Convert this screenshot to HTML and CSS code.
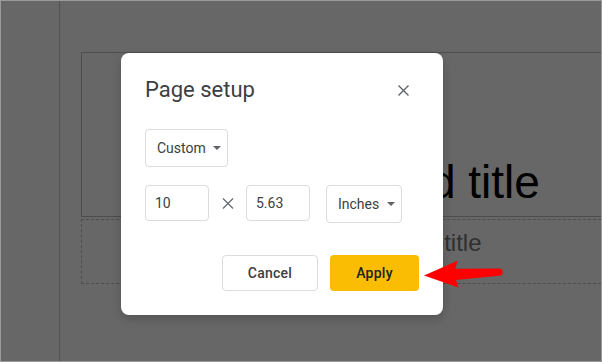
FILE: index.html
```html
<!DOCTYPE html>
<html lang="en">
<head>
    <meta charset="UTF-8">
    <title>Page setup</title>
    <link rel="stylesheet" href="styles.css">
</head>
<body>

    <div class="app">
        <div class="sidebar"></div>
        <div class="canvas">
            <div class="title-box">Click to add title</div>
            <div class="subtitle-box">Click to add subtitle</div>
        </div>
    </div>

    <div class="dialog">
        <div class="dialog-header">
            <h2>Page setup</h2>
            <button class="close-btn" aria-label="Close">
                <svg width="11" height="11" viewBox="0 0 11 11">
                    <path d="M0.5 0.5L10.5 10.5M10.5 0.5L0.5 10.5" stroke="#5f6368" stroke-width="1.4" fill="none"/>
                </svg>
            </button>
        </div>

        <div class="select preset">
            <span>Custom</span>
            <span class="caret"></span>
        </div>

        <div class="size-row">
            <div class="field">10</div>
            <div class="times">
                <svg width="12" height="11" viewBox="0 0 12 11">
                    <path d="M1 0.5L11 10.5M11 0.5L1 10.5" stroke="#5f6368" stroke-width="1.1" fill="none"/>
                </svg>
            </div>
            <div class="field">5.63</div>
            <div class="select units">
                <span>Inches</span>
                <span class="caret"></span>
            </div>
        </div>

        <div class="actions">
            <button class="btn btn-cancel">Cancel</button>
            <button class="btn btn-apply">Apply</button>
        </div>
    </div>

    <!-- annotation arrow pointing at Apply -->
    <svg class="arrow" width="90" height="40" viewBox="420 255 90 40">
        <path d="M424 275.5 L457.5 260.8 L455.5 268.8 L499 268.6 A3.5 3.5 0 0 1 499 275.8 L456 280 L458.5 287.5 Z" fill="#ff0000"/>
    </svg>

</body>
</html>
```

FILE: styles.css
```css
* {
    box-sizing: border-box;
}

body {
    margin: 0;
    width: 602px;
    height: 362px;
    overflow: hidden;
    position: relative;
    background-color: #666766;
    border: 1px solid #9a9a9a;
    font-family: Roboto, "Liberation Sans", sans-serif;
}

.app {
    display: flex;
    height: 100%;
}

.sidebar {
    width: 59px;
    flex-shrink: 0;
    border-right: 1px solid #525352;
}

.canvas {
    flex: 1;
    min-width: 0;
    padding: 51px 0 0 21px;
    font-family: "Liberation Sans", Arial, sans-serif;
}

/* the slide runs on past the right edge, so its boxes have no right border */
.title-box {
    height: 165px;
    padding: 103px 0 0 72px;
    border: 1px solid #4c4d4c;
    border-right: none;
    font-size: 46px;
    line-height: 53px;
    text-align: center;
    color: #000;
    white-space: nowrap;
}

.subtitle-box {
    height: 65px;
    margin-top: 2px;
    padding: 9px 0 0 72px;
    border: 1px dashed #4c4d4c;
    border-right: none;
    font-size: 24px;
    line-height: 28px;
    text-align: center;
    color: #303030;
    white-space: nowrap;
}

.dialog {
    position: absolute;
    left: 120px;
    top: 52px;
    width: 322px;
    height: 262px;
    padding: 24px;
    background-color: #fff;
    border-radius: 8px;
    box-shadow: 0 4px 10px rgba(0, 0, 0, 0.18);
    display: flex;
    flex-direction: column;
    align-items: flex-start;
    color: #3c4043;
}

.dialog-header {
    width: 100%;
    height: 26px;
    display: flex;
    justify-content: space-between;
    align-items: center;
}

.dialog-header h2 {
    margin: 0;
    font-size: 22px;
    font-weight: 400;
    line-height: 26px;
    color: #3c4043;
}

.close-btn {
    width: 32px;
    height: 26px;
    padding: 0;
    border: none;
    background: none;
    display: flex;
    align-items: center;
    justify-content: center;
}

.select {
    height: 38px;
    display: flex;
    align-items: center;
    padding-left: 11px;
    border: 1px solid #dadce0;
    border-radius: 4px;
    font-size: 14px;
}

.preset {
    width: 83px;
    margin-top: 26px;
}

.units {
    width: 76px;
    margin-left: 16px;
}

.caret {
    margin-left: auto;
    margin-right: 6px;
    width: 0;
    height: 0;
    border-left: 4px solid transparent;
    border-right: 4px solid transparent;
    border-top: 4px solid #5f6368;
}

.size-row {
    margin-top: 18px;
    display: flex;
    align-items: flex-start;
}

.field {
    width: 64px;
    height: 36px;
    padding-left: 9px;
    display: flex;
    align-items: center;
    border: 1px solid #dadce0;
    border-radius: 4px;
    font-size: 14px;
}

.times {
    width: 37px;
    height: 36px;
    display: flex;
    align-items: center;
    justify-content: center;
}

.actions {
    margin-top: 32px;
    align-self: flex-end;
    display: flex;
    gap: 12px;
}

.btn {
    height: 36px;
    border-radius: 4px;
    font-family: Roboto, "Liberation Sans", sans-serif;
    font-size: 14px;
    font-weight: 500;
    letter-spacing: 0.25px;
    cursor: pointer;
}

.btn-cancel {
    width: 96px;
    background-color: #fff;
    border: 1px solid #dadce0;
    color: #3c4043;
}

.btn-apply {
    width: 89px;
    background-color: #fbbc04;
    border: none;
    color: #202124;
}

.arrow {
    position: absolute;
    left: 419px;
    top: 254px;
}
```
